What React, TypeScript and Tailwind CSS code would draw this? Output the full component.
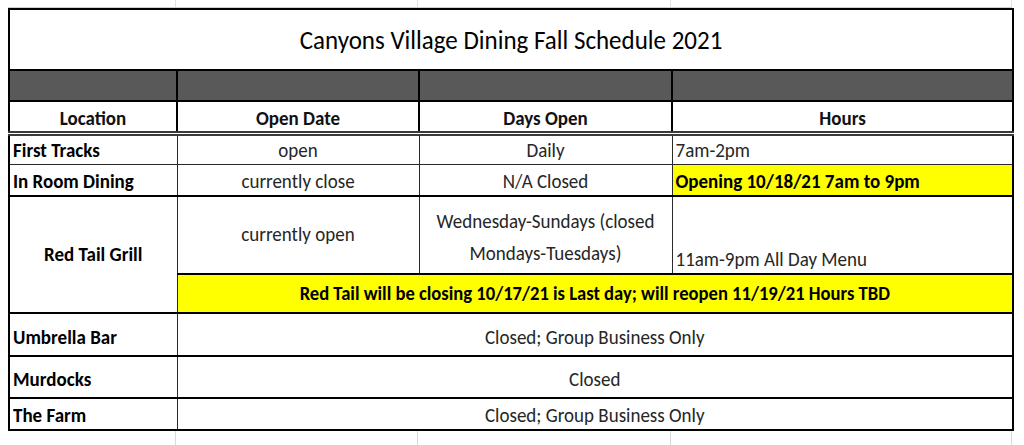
import React from "react";

const cols = [168, 242, 253, 341];

function T({ children }: { children: React.ReactNode }) {
  return <span className="inline-block scale-y-[1.08]">{children}</span>;
}

export default function App() {
  return (
    <div
      className="h-[445px] w-[1024px] overflow-hidden bg-white text-[#262626]"
      style={{ fontFamily: "Carlito, Lato, 'Open Sans', sans-serif" }}
    >
      {/* spreadsheet gridlines above the sheet */}
      <div className="ml-[8px] grid h-[8px] w-[1004px] grid-cols-[168px_242px_253px_341px] border-b border-[#cfcfcf]">
        {cols.map((c) => (
          <div key={c} className="border-r border-[#e2e2e2]" />
        ))}
      </div>

      <table className="ml-[8px] w-[1004px] table-fixed border-collapse border-2 border-black text-[19px] leading-[22px]">
        <colgroup>
          {cols.map((c) => (
            <col key={c} style={{ width: c }} />
          ))}
        </colgroup>
        <tbody>
          <tr className="h-[61px]">
            <td colSpan={4} className="border-2 border-black text-center align-middle text-[25px] text-black">
              <T>Canyons Village Dining Fall Schedule 2021</T>
            </td>
          </tr>
          <tr className="h-[31px]">
            {cols.map((c) => (
              <td key={c} className="border-2 border-black bg-[#595959]" />
            ))}
          </tr>
          <tr className="h-[32px] border-b-[5px] border-double border-[#3a3a3a] font-bold text-[#111]">
            <td className="border-x-2 border-black pt-[5px] text-center align-middle">
              <T>Location</T>
            </td>
            <td className="border-x-2 border-black pt-[5px] text-center align-middle">
              <T>Open Date</T>
            </td>
            <td className="border-x-2 border-black pt-[5px] text-center align-middle">
              <T>Days Open</T>
            </td>
            <td className="border-x-2 border-black pt-[5px] text-center align-middle">
              <T>Hours</T>
            </td>
          </tr>

          <tr className="h-[31px] border-b border-[#2a2a2a]">
            <td className="border-r border-[#2a2a2a] pb-[2px] pl-[3px] align-bottom font-bold text-black">
              <T>First Tracks</T>
            </td>
            <td className="border-r border-[#2a2a2a] pb-[2px] text-center align-bottom">
              <T>open</T>
            </td>
            <td className="border-r border-[#2a2a2a] pb-[2px] text-center align-bottom">
              <T>Daily</T>
            </td>
            <td className="pb-[2px] pl-[3px] align-bottom">
              <T>7am-2pm</T>
            </td>
          </tr>
          <tr className="h-[32px] border-b-2 border-black">
            <td className="border-r border-[#2a2a2a] pb-[2px] pl-[3px] align-bottom font-bold text-black">
              <T>In Room Dining</T>
            </td>
            <td className="border-r border-[#2a2a2a] pb-[2px] text-center align-bottom">
              <T>currently close</T>
            </td>
            <td className="border-r border-[#2a2a2a] pb-[2px] text-center align-bottom">
              <T>N/A Closed</T>
            </td>
            <td className="bg-[#ffff00] pb-[2px] pl-[3px] align-bottom font-bold text-black">
              <T>Opening 10/18/21 7am to 9pm</T>
            </td>
          </tr>

          <tr className="h-[78px]">
            <td
              rowSpan={2}
              className="border-r border-b-2 border-[#2a2a2a] border-b-black text-center align-middle font-bold text-black"
            >
              <T>Red Tail Grill</T>
            </td>
            <td className="border-r border-[#2a2a2a] text-center align-middle">
              <T>currently open</T>
            </td>
            <td className="border-r border-[#2a2a2a] pt-[4px] text-center align-middle leading-[29px]">
              <T>
                Wednesday-Sundays (closed
                <br />
                Mondays-Tuesdays)
              </T>
            </td>
            <td className="pb-[2px] pl-[3px] align-bottom">
              <T>11am-9pm All Day Menu</T>
            </td>
          </tr>
          <tr className="h-[39px] border-b-2 border-black">
            <td
              colSpan={3}
              className="border-t-2 border-black bg-[#ffff00] text-center align-middle text-[18.6px] font-bold text-black"
            >
              <T>Red Tail will be closing 10/17/21 is Last day; will reopen 11/19/21 Hours TBD</T>
            </td>
          </tr>

          <tr className="h-[43px] border-b-2 border-black">
            <td className="border-r border-[#2a2a2a] pb-[6px] pl-[3px] align-bottom font-bold text-black">
              <T>Umbrella Bar</T>
            </td>
            <td colSpan={3} className="pb-[6px] text-center align-bottom">
              <T>Closed; Group Business Only</T>
            </td>
          </tr>
          <tr className="h-[42px] border-b-2 border-black">
            <td className="border-r border-[#2a2a2a] pb-[6px] pl-[3px] align-bottom font-bold text-black">
              <T>Murdocks</T>
            </td>
            <td colSpan={3} className="pb-[6px] text-center align-bottom">
              <T>Closed</T>
            </td>
          </tr>
          <tr className="h-[32px]">
            <td className="border-r border-[#2a2a2a] pb-[2px] pl-[3px] align-bottom font-bold text-black">
              <T>The Farm</T>
            </td>
            <td colSpan={3} className="pb-[2px] text-center align-bottom">
              <T>Closed; Group Business Only</T>
            </td>
          </tr>
        </tbody>
      </table>

      {/* spreadsheet gridlines below the sheet */}
      <div className="ml-[8px] grid h-[20px] w-[1004px] grid-cols-[168px_242px_253px_341px]">
        {cols.map((c) => (
          <div key={c} className="border-r border-[#dadada]" />
        ))}
      </div>
    </div>
  );
}
